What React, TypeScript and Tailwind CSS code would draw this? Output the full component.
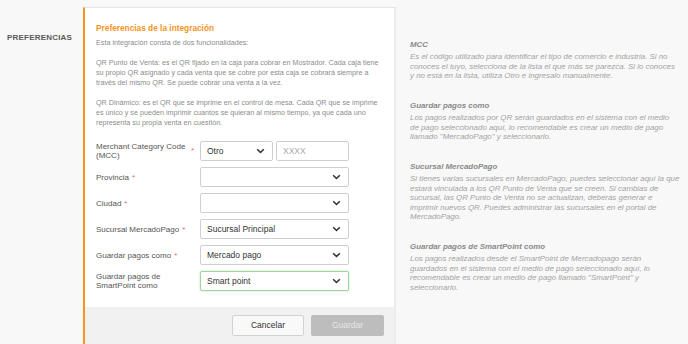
import React from 'react';

const Chevron = () => (
    <svg width="9" height="6" viewBox="0 0 9 6" className="shrink-0">
        <path d="M1.2 1.3 L4.5 4.5 L7.8 1.3" fill="none" stroke="#333" strokeWidth="1.6" />
    </svg>
);

const Select = ({ value, focus }: { value?: string; focus?: boolean }) => (
    <div
        className={`h-[20px] w-[149px] flex items-center justify-between pl-[6px] pr-[7px] bg-white rounded-[2px] border text-[8.5px] text-[#333] ${
            focus ? 'border-[#9ed69e] shadow-[0_0_2px_rgba(120,200,120,0.6)]' : 'border-[#cfcfcf]'
        }`}
    >
        <span>{value}</span>
        <Chevron />
    </div>
);

const Req = () => <span className="text-[#f26d5b] ml-[3px]">*</span>;

const Row = ({ label, children }: { label: React.ReactNode; children: React.ReactNode }) => (
    <div className="flex items-center h-[20px]">
        <div className="w-[104px] text-[8px] leading-[9px] text-[#555]">{label}</div>
        {children}
    </div>
);

const Help = ({ title, children }: { title: string; children: React.ReactNode }) => (
    <div className="mb-[20.5px]">
        <div className="text-[7.9px] font-bold italic text-[#8a8a8a] leading-[10px] mb-[2px]">{title}</div>
        <p className="text-[7.9px] italic text-[#a3a3a3] leading-[9.5px]">{children}</p>
    </div>
);

export default function App() {
    return (
        <div className="w-[688px] h-[344px] overflow-hidden bg-[#f8f8f8] flex font-['Liberation_Sans',Arial,sans-serif]">
            {/* left section label */}
            <div className="w-[83px] shrink-0 pl-[7px] pt-[23px]">
                <span className="text-[8px] font-bold text-[#5a5a5a] tracking-[0.2px]">PREFERENCIAS</span>
            </div>

            {/* card */}
            <div className="w-[313px] shrink-0 mt-[7px] h-[360px] bg-white border-l-2 border-l-[#f7941d] border-t border-t-[#e4e4e4] border-r-2 border-r-[#ececec] flex flex-col">
                <div className="pl-[11px] pr-[10px] pt-[14px] pb-[16px]">
                    <h3 className="text-[8.3px] font-bold text-[#f7941d] leading-[12px] mb-[4px]">
                        Preferencias de la integración
                    </h3>
                    <div className="text-[7.2px] leading-[10px] text-[#8c8c8c]">
                        <p className="mb-[10px]">Esta integración consta de dos funcionalidades:</p>
                        <p className="mb-[10px]">
                            QR Punto de Venta: es el QR fijado en la caja para cobrar en Mostrador. Cada caja tiene su
                            propio QR asignado y cada venta que se cobre por esta caja se cobrará siempre a través del
                            mismo QR. Se puede cobrar una venta a la vez.
                        </p>
                        <p>
                            QR Dinámico: es el QR que se imprime en el control de mesa. Cada QR que se imprime es único
                            y se pueden imprimir cuantos se quieran al mismo tiempo, ya que cada uno representa su
                            propia venta en cuestión.
                        </p>
                    </div>

                    <div className="mt-[13px] flex flex-col gap-[6px]">
                        <div className="flex items-center h-[20px]">
                            <div className="w-[95px] text-[8px] leading-[9px] text-[#555]">
                                Merchant Category Code
                                <br />
                                (MCC)
                            </div>
                            <span className="w-[9px] text-[8px] text-[#f26d5b]">*</span>
                            <div className="h-[20px] w-[73px] flex items-center justify-between pl-[6px] pr-[7px] bg-white rounded-[2px] border border-[#cfcfcf] text-[8.5px] text-[#333]">
                                <span>Otro</span>
                                <Chevron />
                            </div>
                            <div className="ml-[3px] h-[20px] w-[73px] flex items-center pl-[6px] bg-white rounded-[2px] border border-[#cfcfcf] text-[8.5px] text-[#aaa]">
                                XXXX
                            </div>
                        </div>
                        <Row label={<>Provincia<Req /></>}>
                            <Select />
                        </Row>
                        <Row label={<>Ciudad<Req /></>}>
                            <Select />
                        </Row>
                        <Row label={<>Sucursal MercadoPago<Req /></>}>
                            <Select value="Sucursal Principal" />
                        </Row>
                        <Row label={<>Guardar pagos como<Req /></>}>
                            <Select value="Mercado pago" />
                        </Row>
                        <Row label={<>Guardar pagos de<br />SmartPoint como</>}>
                            <Select value="Smart point" focus />
                        </Row>
                    </div>
                </div>

                <div className="flex-1 bg-[#f1f1f1] flex justify-end gap-[7px] pt-[8px] pr-[10px]">
                    <button className="h-[21px] w-[72px] bg-[#f9f9f9] border border-[#d2d2d2] rounded-[2px] text-[8.5px] text-[#333]">
                        Cancelar
                    </button>
                    <button className="h-[21px] w-[73px] bg-[#bdbdbd] rounded-[2px] text-[8.5px] text-[#e6e6e6]">
                        Guardar
                    </button>
                </div>
            </div>

            {/* help column */}
            <div className="flex-1 pl-[14px] pr-[8px] pt-[40px]">
                <Help title="MCC">
                    Es el código utilizado para identificar el tipo de comercio e industria. Si no conoces el tuyo,
                    selecciona de la lista el que más se parezca. Si lo conoces y no está en la lista, utiliza Otro e
                    ingresalo manualmente.
                </Help>
                <Help title="Guardar pagos como">
                    Los pagos realizados por QR serán guardados en el sistema con el medio de pago seleccionado aquí,
                    lo recomendable es crear un medio de pago llamado "MercadoPago" y seleccionarlo.
                </Help>
                <Help title="Sucursal MercadoPago">
                    Si tienes varias sucursales en MercadoPago, puedes seleccionar aquí la que estará vinculada a los
                    QR Punto de Venta que se creen. Si cambias de sucursal, las QR Punto de Venta no se actualizan,
                    deberás generar e imprimir nuevos QR. Puedes administrar las sucursales en el portal de
                    MercadoPago.
                </Help>
                <Help title="Guardar pagos de SmartPoint como">
                    Los pagos realizados desde el SmartPoint de Mercadopago serán guardados en el sistema con el
                    medio de pago seleccionado aquí, lo recomendable es crear un medio de pago llamado "SmartPoint" y
                    seleccionarlo.
                </Help>
            </div>
        </div>
    );
}
